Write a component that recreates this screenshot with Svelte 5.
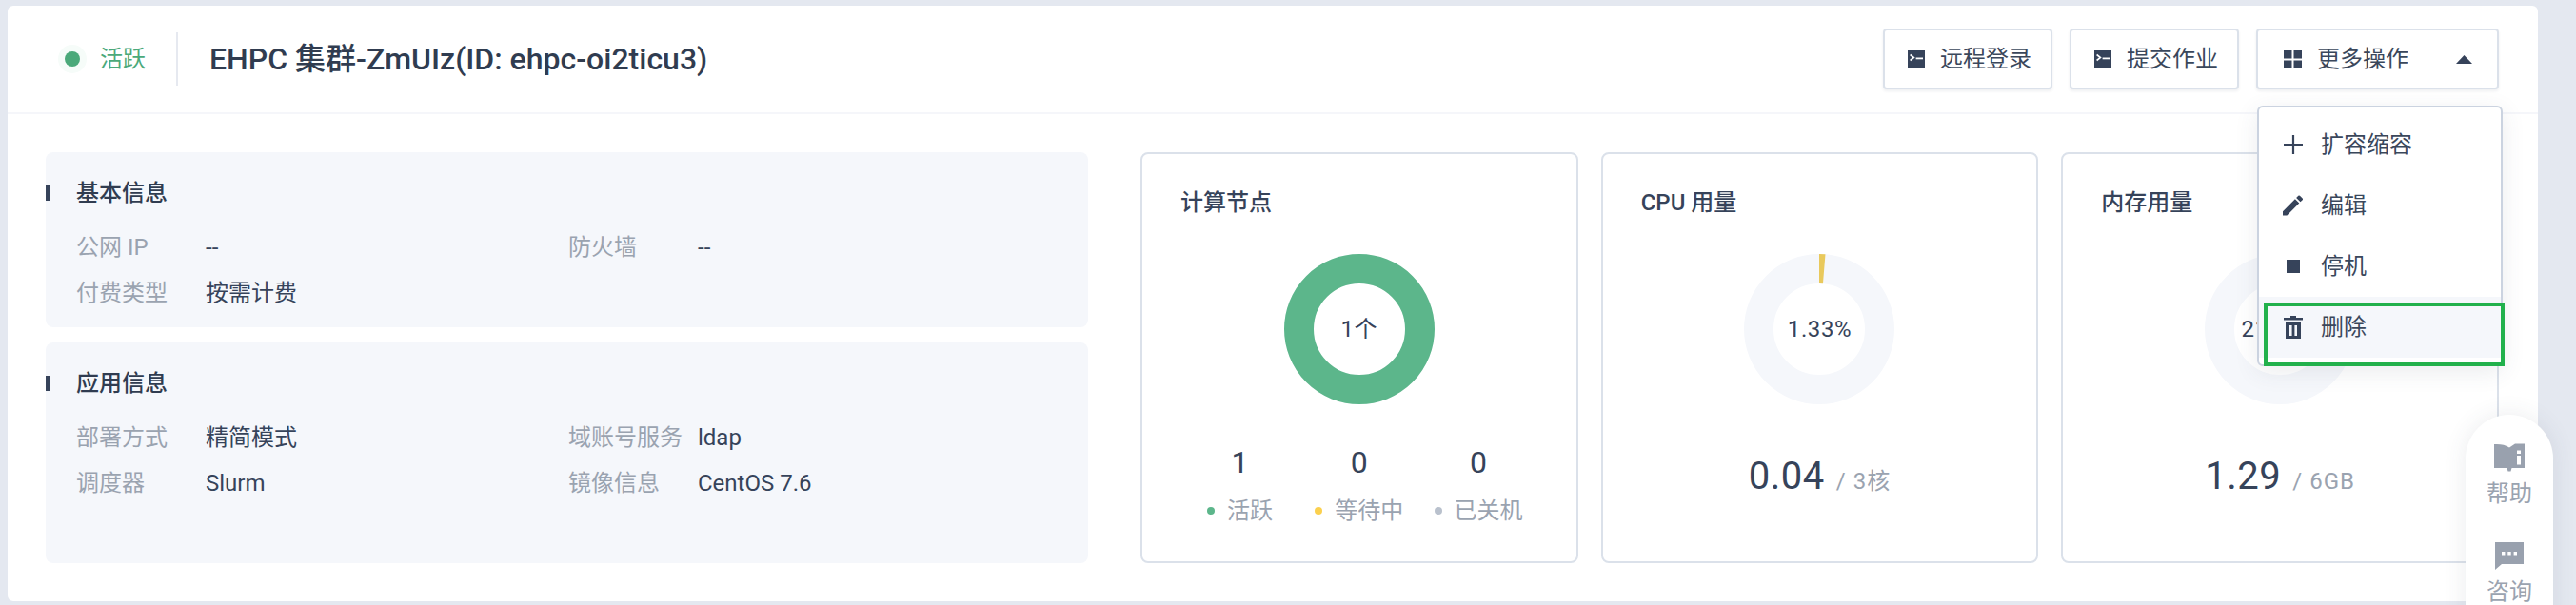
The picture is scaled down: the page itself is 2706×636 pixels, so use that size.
<script lang="ts">
	const basic = [
		[
			{ label: '公网 IP', value: '--' },
			{ label: '防火墙', value: '--' }
		],
		[{ label: '付费类型', value: '按需计费' }]
	];
	const app = [
		[
			{ label: '部署方式', value: '精简模式' },
			{ label: '域账号服务', value: 'ldap' }
		],
		[
			{ label: '调度器', value: 'Slurm' },
			{ label: '镜像信息', value: 'CentOS 7.6' }
		]
	];
	const nodes = [
		{ count: 1, label: '活跃', color: '#5cb68b' },
		{ count: 0, label: '等待中', color: '#fbd04e' },
		{ count: 0, label: '已关机', color: '#b9c1cd' }
	];
	const usage = [
		{ title: 'CPU 用量', center: '1.33%', percent: 1.33, value: '0.04', total: '3核' },
		{ title: '内存用量', center: '21.50%', percent: 21.5, value: '1.29', total: '6GB' }
	];
	const R = 63.5;
	const C = 2 * Math.PI * R;
</script>

{#snippet terminal()}
	<svg class="btn-icon" width="18" height="19" viewBox="0 0 18 19">
		<rect width="18" height="19" fill="#36435a" />
		<path d="M2.6 4.5 6.4 7.5 2.6 10.5" fill="none" stroke="#fff" stroke-width="1.6" />
		<path d="M8.6 8.4H16" stroke="#fff" stroke-width="1.8" />
	</svg>
{/snippet}

{#snippet donut(percent: number, color: string, center: string)}
	<div class="donut">
		<svg width="158" height="158" viewBox="0 0 158 158">
			<circle cx="79" cy="79" r={R} fill="none" stroke="#f5f7fb" stroke-width="31" />
			<circle
				cx="79"
				cy="79"
				r={R}
				fill="none"
				stroke={color}
				stroke-width="31"
				stroke-dasharray={`${(C * percent) / 100} ${C}`}
				transform="rotate(-90 79 79)"
			/>
		</svg>
		<span class="donut-text">{center}</span>
	</div>
{/snippet}

{#snippet infoPanel(title: string, rows: { label: string; value: string }[][], tall: boolean)}
	<section class="panel" class:tall>
		<h3 class="panel-title">{title}</h3>
		{#each rows as row}
			<div class="row">
				{#each row as item}
					<div class="field">
						<span class="label">{item.label}</span>
						<span class="value">{item.value}</span>
					</div>
				{/each}
			</div>
		{/each}
	</section>
{/snippet}

<div class="page">
	<main class="card">
		<header class="header">
			<div class="status">
				<span class="halo"><span class="dot"></span></span>
				<span class="status-text">活跃</span>
			</div>
			<h1 class="title">EHPC 集群-ZmUIz(ID: ehpc-oi2ticu3)</h1>
			<div class="actions">
				<button type="button" class="btn">
					{@render terminal()}
					<span>远程登录</span>
				</button>
				<button type="button" class="btn">
					{@render terminal()}
					<span>提交作业</span>
				</button>
				<div class="more">
					<button type="button" class="btn btn-more">
						<svg class="btn-icon" width="19" height="19" viewBox="0 0 19 19" fill="#36435a">
							<rect width="8.5" height="8.5" />
							<rect x="10.5" width="8.5" height="8.5" />
							<rect y="10.5" width="8.5" height="8.5" />
							<rect x="10.5" y="10.5" width="8.5" height="8.5" />
						</svg>
						<span>更多操作</span>
						<svg class="caret" width="17" height="9" viewBox="0 0 17 9">
							<path d="M8.5 0 17 9H0Z" fill="#36435a" />
						</svg>
					</button>
					<div class="menu">
						<div class="menu-item">
							<span class="menu-icon">
								<svg width="20" height="20" viewBox="0 0 20 20">
									<path d="M10 0V20M0 10H20" stroke="#36435a" stroke-width="2.2" />
								</svg>
							</span>
							扩容缩容
						</div>
						<div class="menu-item">
							<span class="menu-icon">
								<svg width="21" height="22" viewBox="3 3 18 18" fill="#36435a">
									<path
										d="M3 17.25V21h3.75L17.81 9.94l-3.75-3.75L3 17.25zM20.71 7.04a1 1 0 0 0 0-1.41l-2.34-2.34a1 1 0 0 0-1.41 0l-1.83 1.83 3.75 3.75 1.83-1.83z"
									/>
								</svg>
							</span>
							编辑
						</div>
						<div class="menu-item">
							<span class="menu-icon">
								<svg width="14" height="14" viewBox="0 0 14 14"><rect width="14" height="14" fill="#36435a" /></svg>
							</span>
							停机
						</div>
						<div class="menu-item active">
							<span class="menu-icon">
								<svg width="20" height="24" viewBox="0 0 20 24">
									<path d="M7 0H13V2H20V4.5H0V2H7Z" fill="#36435a" />
									<path d="M2 7H18V24H2Z" fill="#36435a" />
									<path d="M6 10H8.6V21H6ZM11.4 10H14V21H11.4Z" fill="#f5f7fb" />
								</svg>
							</span>
							删除
						</div>
						<div class="highlight"></div>
					</div>
				</div>
			</div>
		</header>

		<div class="body">
			<div class="info">
				{@render infoPanel('基本信息', basic, false)}
				{@render infoPanel('应用信息', app, true)}
			</div>
			<div class="stats">
				<section class="stat-card">
					<h3 class="stat-title">计算节点</h3>
					{@render donut(100, '#5cb68b', '1个')}
					<div class="counts">
						{#each nodes as node}
							<div class="count">
								<span class="count-num">{node.count}</span>
								<span class="legend">
									<i class="legend-dot" style="background: {node.color}"></i>
									{node.label}
								</span>
							</div>
						{/each}
					</div>
				</section>
				{#each usage as item}
					<section class="stat-card">
						<h3 class="stat-title">{item.title}</h3>
						{@render donut(item.percent, '#e9c95c', item.center)}
						<div class="usage">
							<span class="usage-value">{item.value}</span>
							<span class="usage-total">/ {item.total}</span>
						</div>
					</section>
				{/each}
			</div>
		</div>
	</main>

	<aside class="helper">
		<svg width="32" height="30" viewBox="0 0 32 30" fill="#99a1ae">
			<path d="M0 1C6 .6 12 1.4 16 4.5L22 .5H32V26H18.5L17.5 29.5H14.5L13.5 26H0Z" />
			<path d="M24 7.5H28V11H24ZM24 13H28V22.5H24Z" fill="#fff" />
		</svg>
		<span class="helper-text">帮助</span>
		<svg class="chat" width="30" height="29" viewBox="0 0 30 29" fill="#99a1ae">
			<path d="M0 0H30V23H7L0 29Z" />
			<path d="M7 10H10.4V13.4H7ZM13.3 10H16.7V13.4H13.3ZM19.6 10H23V13.4H19.6Z" fill="#fff" />
		</svg>
		<span class="helper-text">咨询</span>
	</aside>
</div>

<style>
	:global(body) {
		background: #e4e8f0;
		overflow: hidden;
		height: 636px;
	}

	.page {
		position: relative;
		height: 636px;
		overflow: hidden;
		padding: 6px 40px 4px 8px;
		box-sizing: border-box;
		font-family: Roboto, 'Noto Sans CJK SC', sans-serif;
		font-size: 24px;
		line-height: 36px;
		color: #36435a;
	}

	h1,
	h3 {
		margin: 0;
	}

	.card {
		height: 100%;
		background: #fff;
		border-radius: 6px;
	}

	.header {
		display: flex;
		align-items: center;
		height: 112px;
		padding: 0 41px 0 53px;
		border-bottom: 2px solid #f5f6fa;
		box-sizing: content-box;
	}

	.status {
		display: flex;
		align-items: center;
		gap: 14px;
		height: 56px;
		padding-right: 32px;
		border-right: 2px solid #e6e9f0;
	}

	.halo {
		display: flex;
		align-items: center;
		justify-content: center;
		width: 30px;
		height: 30px;
		border-radius: 50%;
		background: #f6fcf9;
	}

	.dot {
		width: 16px;
		height: 16px;
		border-radius: 50%;
		background: #4ba97a;
	}

	.status-text {
		color: #4ba97a;
	}

	.title {
		margin-left: 33px;
		font-size: 32px;
		font-weight: 500;
		line-height: 44px;
		color: #303c50;
	}

	.actions {
		display: flex;
		gap: 18px;
		margin-left: auto;
	}

	.btn {
		display: flex;
		align-items: center;
		height: 64px;
		padding: 0 20px 0 24px;
		box-sizing: border-box;
		border: 2px solid #dbe1ea;
		border-radius: 4px;
		background: #fff;
		box-shadow: 0 2px 3px rgba(54, 67, 90, 0.08);
		font: inherit;
		color: #3a475b;
	}

	.btn-icon {
		margin-right: 16px;
		flex: none;
	}

	.btn-more {
		width: 255px;
		padding-left: 27px;
	}

	.caret {
		margin-left: auto;
		margin-right: 6px;
	}

	.more {
		position: relative;
	}

	.menu {
		position: absolute;
		z-index: 3;
		top: 81px;
		left: 1px;
		width: 258px;
		padding: 7px 0;
		box-sizing: border-box;
		border: 2px solid #cbd3e0;
		border-radius: 6px;
		background: #fff;
		box-shadow: 0 6px 24px rgba(54, 67, 90, 0.1);
	}

	.menu-item {
		display: flex;
		align-items: center;
		height: 64px;
		padding-left: 25px;
		color: #3a475b;
	}

	.menu-item.active {
		background: #f5f7fb;
	}

	.menu-icon {
		display: flex;
		align-items: center;
		justify-content: center;
		width: 21px;
		margin-right: 19px;
	}

	.highlight {
		position: absolute;
		top: 205px;
		left: 5px;
		width: 253px;
		height: 67px;
		box-sizing: border-box;
		border: 4px solid #22b14c;
	}

	.body {
		display: grid;
		grid-template-columns: 1095px 1fr;
		gap: 55px;
		padding: 40px 41px 0 40px;
	}

	.info {
		display: flex;
		flex-direction: column;
		gap: 16px;
	}

	.panel {
		height: 184px;
		padding: 25px 32px 0;
		box-sizing: border-box;
		border-radius: 8px;
		background: #f5f7fb;
	}

	.panel.tall {
		height: 232px;
	}

	.panel-title {
		position: relative;
		margin-bottom: 15px;
		font-size: 24px;
		font-weight: 500;
		color: #303c50;
	}

	.panel-title::before {
		content: '';
		position: absolute;
		left: -32px;
		top: 10px;
		width: 4px;
		height: 16px;
		background: #36435a;
	}

	.row {
		display: grid;
		grid-template-columns: 517px 1fr;
		height: 48px;
		align-items: center;
	}

	.field {
		display: flex;
	}

	.label {
		width: 136px;
		color: #9aa3b0;
	}

	.stats {
		display: grid;
		grid-template-columns: repeat(3, 1fr);
		gap: 24px;
	}

	.stat-card {
		display: flex;
		flex-direction: column;
		align-items: center;
		height: 432px;
		padding: 33px 40px 0;
		box-sizing: border-box;
		border: 2px solid #dbe1ea;
		border-radius: 8px;
	}

	.stat-title {
		align-self: stretch;
		font-size: 24px;
		font-weight: 500;
		color: #36435a;
	}

	.donut {
		display: grid;
		place-items: center;
		margin-top: 36px;
	}

	.donut > * {
		grid-area: 1 / 1;
	}

	.donut svg {
		display: block;
	}

	.donut-text {
		letter-spacing: 0.6px;
	}

	.counts {
		display: grid;
		grid-template-columns: repeat(3, 1fr);
		align-self: stretch;
		margin-top: 39px;
		text-align: center;
	}

	.count {
		display: flex;
		flex-direction: column;
		align-items: center;
	}

	.count-num {
		font-size: 32px;
		line-height: 44px;
	}

	.legend {
		display: flex;
		align-items: center;
		gap: 13px;
		margin-top: 11px;
		color: #9aa3b0;
	}

	.legend-dot {
		width: 8px;
		height: 8px;
		border-radius: 50%;
	}

	.usage {
		display: flex;
		align-items: baseline;
		gap: 12px;
		margin-top: 48px;
		line-height: 56px;
	}

	.usage-value {
		font-size: 40px;
		letter-spacing: 0.5px;
	}

	.usage-total {
		color: #9aa3b0;
		letter-spacing: 1px;
	}

	.helper {
		position: absolute;
		z-index: 4;
		top: 436px;
		left: 2590px;
		display: flex;
		flex-direction: column;
		align-items: center;
		width: 92px;
		height: 260px;
		padding-top: 30px;
		box-sizing: border-box;
		border-radius: 46px;
		background: #fff;
		box-shadow: 0 0 24px rgba(54, 67, 90, 0.1);
	}

	.helper-text {
		margin-top: 5px;
		color: #9aa3b0;
	}

	.chat {
		margin-top: 33px;
	}
</style>
